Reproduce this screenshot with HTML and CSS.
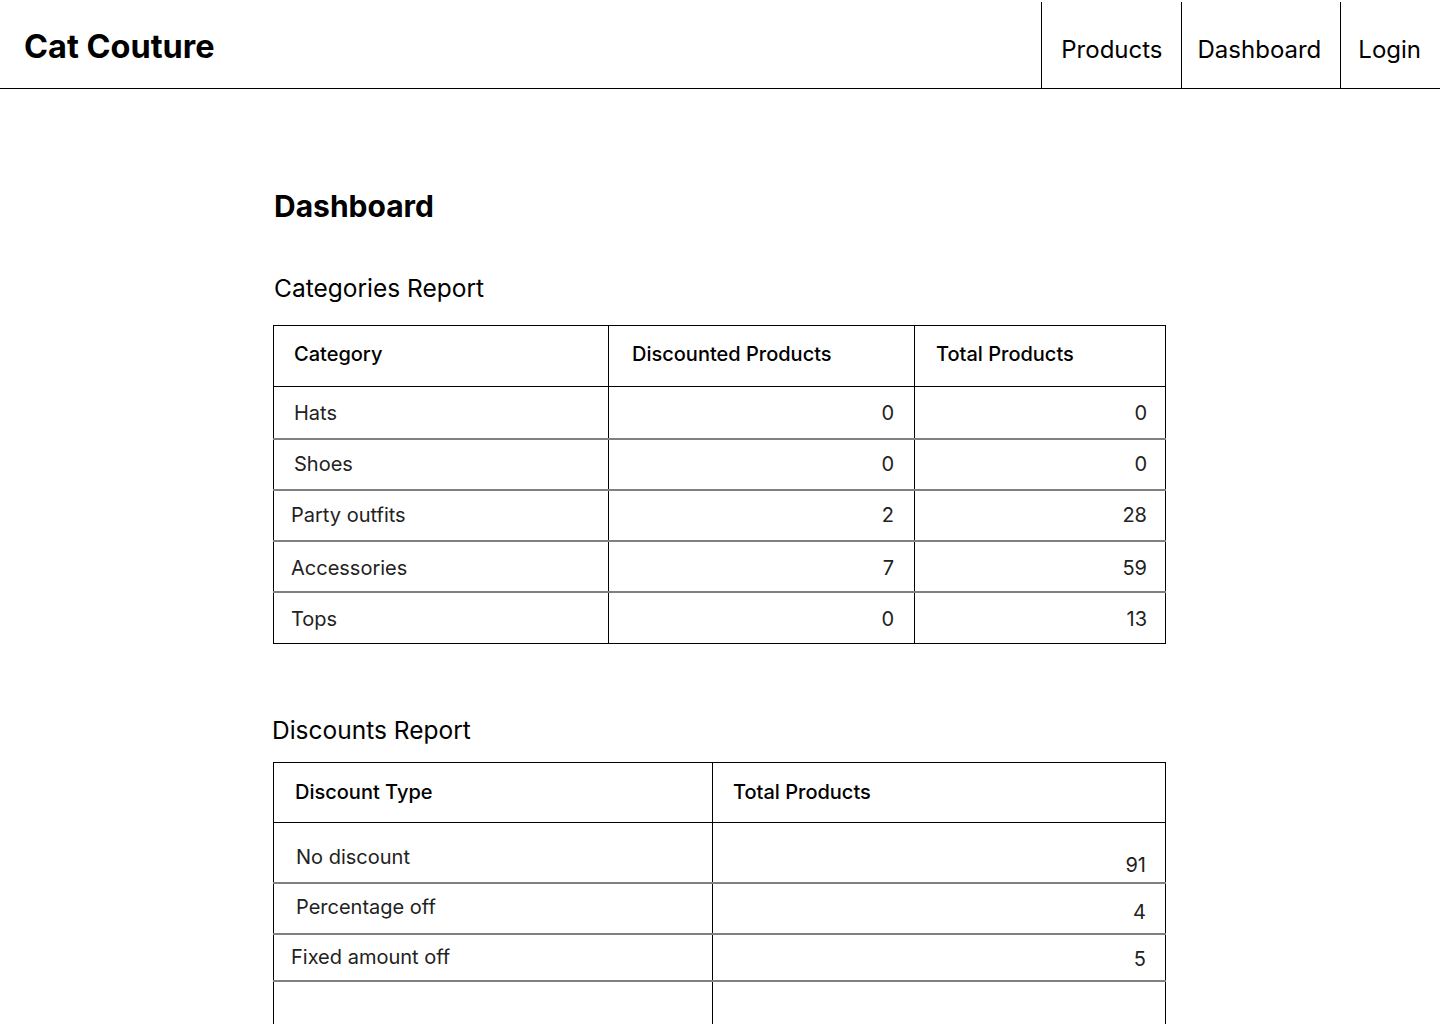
FILE: index.html
```html
<!DOCTYPE html>
<html lang="en">
<head>
<meta charset="utf-8">
<title>Cat Couture — Dashboard</title>
<link rel="stylesheet" href="styles.css">
</head>
<body>
<header class="topbar">
  <div class="brand">Cat Couture</div>
  <nav class="nav">
    <a class="nav-item nav-products" href="#">Products</a>
    <a class="nav-item nav-dashboard" href="#">Dashboard</a>
    <a class="nav-item nav-login" href="#">Login</a>
  </nav>
</header>

<main class="main">
  <h1 class="page-title">Dashboard</h1>

  <h2 class="section-title">Categories Report</h2>
  <table class="report report-categories">
    <colgroup>
      <col class="c-cat">
      <col class="c-disc">
      <col class="c-total">
    </colgroup>
    <thead>
      <tr>
        <th class="h-cat">Category</th>
        <th class="h-disc">Discounted Products</th>
        <th class="h-total">Total Products</th>
      </tr>
    </thead>
    <tbody>
      <tr class="r1"><td class="name name-a">Hats</td><td class="num num-disc">0</td><td class="num num-total">0</td></tr>
      <tr class="r2"><td class="name name-a">Shoes</td><td class="num num-disc">0</td><td class="num num-total">0</td></tr>
      <tr class="r3"><td class="name name-b">Party outfits</td><td class="num num-disc">2</td><td class="num num-total">28</td></tr>
      <tr class="r4"><td class="name name-b">Accessories</td><td class="num num-disc">7</td><td class="num num-total">59</td></tr>
      <tr class="r5"><td class="name name-b">Tops</td><td class="num num-disc">0</td><td class="num num-total">13</td></tr>
    </tbody>
  </table>

  <h2 class="section-title section-title-2">Discounts Report</h2>
  <table class="report report-discounts">
    <colgroup>
      <col class="c-type">
      <col class="c-dtotal">
    </colgroup>
    <thead>
      <tr>
        <th class="h-type">Discount Type</th>
        <th class="h-dtotal">Total Products</th>
      </tr>
    </thead>
    <tbody>
      <tr class="d1"><td class="name name-c">No discount</td><td class="num num-d num-d1">91</td></tr>
      <tr class="d2"><td class="name name-c">Percentage off</td><td class="num num-d num-d2">4</td></tr>
      <tr class="d3"><td class="name name-b">Fixed amount off</td><td class="num num-d num-d3">5</td></tr>
      <tr class="d4"><td class="name"></td><td class="num"></td></tr>
    </tbody>
  </table>
</main>
</body>
</html>
```

FILE: styles.css
```css
* {
  box-sizing: border-box;
}

html, body {
  margin: 0;
  padding: 0;
  background: #ffffff;
}

body {
  font-family: Inter, "Noto Sans", "Liberation Sans", sans-serif;
  color: #000000;
}

/* ---------- Header ---------- */
.topbar {
  display: flex;
  align-items: stretch;
  justify-content: space-between;
  height: 89px;
  border-bottom: 1px solid #000000;
}

.brand {
  padding-left: 24px;
  padding-top: 28px;
  font-size: 32.5px;
  font-weight: 700;
  line-height: 38px;
}

.nav {
  display: flex;
  align-items: stretch;
  padding-top: 2px;
}

.nav-item {
  display: flex;
  align-items: center;
  padding: 10px 18px 0 18px;
  border-left: 1px solid #000000;
  color: #000000;
  text-decoration: none;
  font-size: 24px;
  font-weight: 400;
  line-height: 30px;
}

.nav-products {
  padding-left: 19px;
}

.nav-dashboard {
  padding-left: 16px;
  padding-right: 19px;
}

.nav-login {
  padding-left: 17px;
  padding-right: 19px;
}

/* ---------- Main ---------- */
.main {
  width: 894px;
  margin: 0 auto;
  padding-top: 100px;
}

.page-title {
  margin: 0 0 0 1px;
  font-size: 30px;
  font-weight: 700;
  line-height: 34px;
}

.section-title {
  margin: 51px 0 22px 1px;
  font-size: 24.5px;
  font-weight: 400;
  line-height: 29px;
}

.section-title-2 {
  margin: 72px 0 17px -1px;
}

/* ---------- Tables ---------- */
.report {
  width: 893px;
  border-collapse: collapse;
  table-layout: fixed;
  border: 1px solid #000000;
}

.report th,
.report td {
  font-size: 20px;
  line-height: 24px;
  padding: 0;
  vertical-align: middle;
}

.report th {
  text-align: left;
  font-weight: 500;
  height: 61px;
  border-right: 1px solid #000000;
  border-bottom: 1px solid #000000;
}

.report td {
  font-weight: 400;
  color: #222222;
  height: 51px;
  border-right: 1px solid #000000;
  border-bottom: 2px solid #808080;
}

.report tbody tr:last-child td {
  border-bottom: 1px solid #000000;
}

.c-cat { width: 335px; }
.c-disc { width: 306px; }

.c-type { width: 439px; }

.report .h-cat { padding-left: 20px; padding-bottom: 5px; }
.report .h-disc { padding-left: 23px; padding-bottom: 5px; }
.report .h-total { padding-left: 21px; padding-bottom: 5px; }
.report .h-type { padding-left: 21px; padding-bottom: 2px; }
.report .h-dtotal { padding-left: 20px; padding-bottom: 2px; }

.report .name-a { padding-left: 20px; }
.report .name-b { padding-left: 17px; }
.report .name-c { padding-left: 22px; }

.report .num {
  text-align: right;
}

.report .num-disc { padding-right: 20px; }
.report .num-total { padding-right: 18px; }
.report .num-d { padding-right: 19px; }

.report-categories .r1 td { height: 52px; padding-top: 1px; }
.report-categories .r4 td { padding-top: 3px; }
.report-categories .r5 td { height: 52px; padding-top: 2px; }

.report-discounts th { height: 60px; }

.report-discounts .d1 td { height: 60px; }
.report-discounts .d1 .name-c { padding-top: 9px; }
.report-discounts .d1 .num-d { padding-top: 25px; }
.report-discounts .d2 .name-c { padding-bottom: 3px; }
.report-discounts .d2 .num-d { padding-top: 7px; }
.report-discounts .d3 td { height: 47px; }
.report-discounts .d3 .num-d { padding-top: 3px; }
.report-discounts .d4 td { height: 80px; }
```
